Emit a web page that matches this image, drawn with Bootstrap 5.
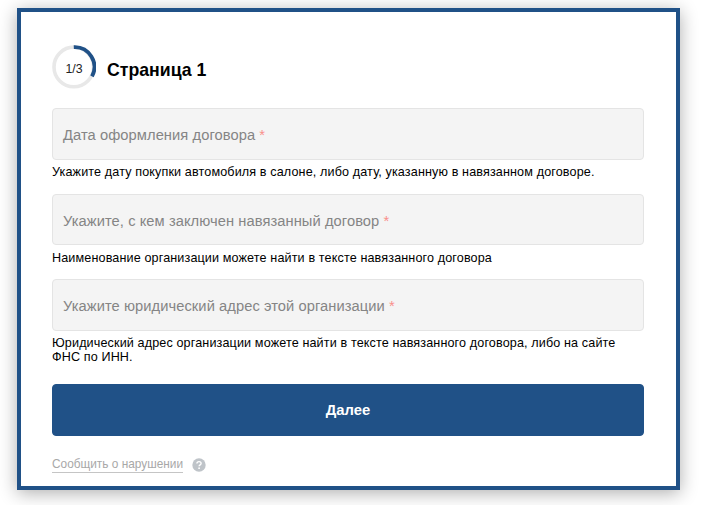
<!DOCTYPE html>
<html lang="ru">
<head>
<meta charset="utf-8">
<meta name="viewport" content="width=device-width, initial-scale=1">
<title>Страница 1</title>
<link rel="stylesheet" href="https://cdn.jsdelivr.net/npm/bootstrap@5.3.0/dist/css/bootstrap.min.css">
<style>
body { font-family: "Liberation Sans", Arial, sans-serif; color: #000; background: #fff; }
.form-panel { width: 663px; height: 481.5px; padding: 33px 32px 0 31px; background: #fff; border: 4px solid #205187; box-shadow: 0 3px 17px rgba(0,0,0,.32); }
.page-area { padding: 8px 0 0 17px; height: 505px; }
.step-title { font-size: 17.7px; line-height: 22px; margin-left: 11px; padding-top: 6px; }
.step-head { margin-bottom: 19px; }
.field-box { height: 51.5px; padding: 3px 10px 0; font-size: 14.7px; letter-spacing: .07px; color: #858585; background: #f4f4f4; border: 1px solid #e4e4e4; border-radius: 4px; }
.req { color: #f98f8b; }
.hint { font-size: 12.6px; letter-spacing: .125px; line-height: 14.2px; padding-top: 5.5px; height: 34px; }
.next-btn { height: 52px; font-size: 14.8px; margin-top: 19px; padding-top: 8px; border-radius: 4px; --bs-btn-color: #fff; --bs-btn-bg: #205187; --bs-btn-border-color: #205187; --bs-btn-hover-color: #fff; --bs-btn-hover-bg: #1a4472; }
.report-row { margin-top: 21px; }
.report { font-size: 11.85px; line-height: 15px; color: #a8a8a8; border-bottom: 1px solid #c5c5c5; }
.help-dot { margin-left: 8.5px; }
</style>
<script src="https://cdn.jsdelivr.net/npm/bootstrap@5.3.0/dist/js/bootstrap.bundle.min.js"></script>
</head>
<body>
<div class="page-area overflow-hidden">
<main class="form-panel">
  <header class="step-head d-flex align-items-center">
    <svg width="44" height="44" viewBox="0 0 44 44" role="img" aria-label="1/3">
      <circle cx="21.8" cy="21.9" r="19.8" fill="none" stroke="#e8e8e8" stroke-width="3.6"/>
      <path d="M21.8 2.1 A19.8 19.8 0 0 1 40 31.3" fill="none" stroke="#205187" stroke-width="3.8"/>
      <text x="22" y="28.2" text-anchor="middle" font-size="12.3" fill="#222">1/3</text>
    </svg>
    <h1 class="step-title fw-bold mb-0">Страница 1</h1>
  </header>
  <form>
    <div class="field-box d-flex align-items-center"><span>Дата оформления договора <span class="req">*</span></span></div>
    <div class="hint">Укажите дату покупки автомобиля в салоне, либо дату, указанную в навязанном договоре.</div>
    <div class="field-box d-flex align-items-center"><span>Укажите, с кем заключен навязанный договор <span class="req">*</span></span></div>
    <div class="hint">Наименование организации можете найти в тексте навязанного договора</div>
    <div class="field-box d-flex align-items-center"><span>Укажите юридический адрес этой организации <span class="req">*</span></span></div>
    <div class="hint">Юридический адрес организации можете найти в тексте навязанного договора, либо на сайте<br>ФНС по ИНН.</div>
    <button type="button" class="next-btn btn w-100 fw-bold">Далее</button>
  </form>
  <div class="report-row d-flex align-items-center">
    <span class="report">Сообщить о нарушении</span>
    <svg class="help-dot" width="14" height="14" viewBox="0 0 14 14" aria-hidden="true">
      <circle cx="7" cy="7" r="6.7" fill="#bfc4c9"/>
      <path d="M4.9 5.5C5 3 9.1 3 9.1 5.4C9.1 6.9 7.1 6.8 7.1 8.3" fill="none" stroke="#fff" stroke-width="1.4"/>
      <circle cx="7.1" cy="10.2" r=".9" fill="#fff"/>
    </svg>
  </div>
</main>
</div>
</body>
</html>
